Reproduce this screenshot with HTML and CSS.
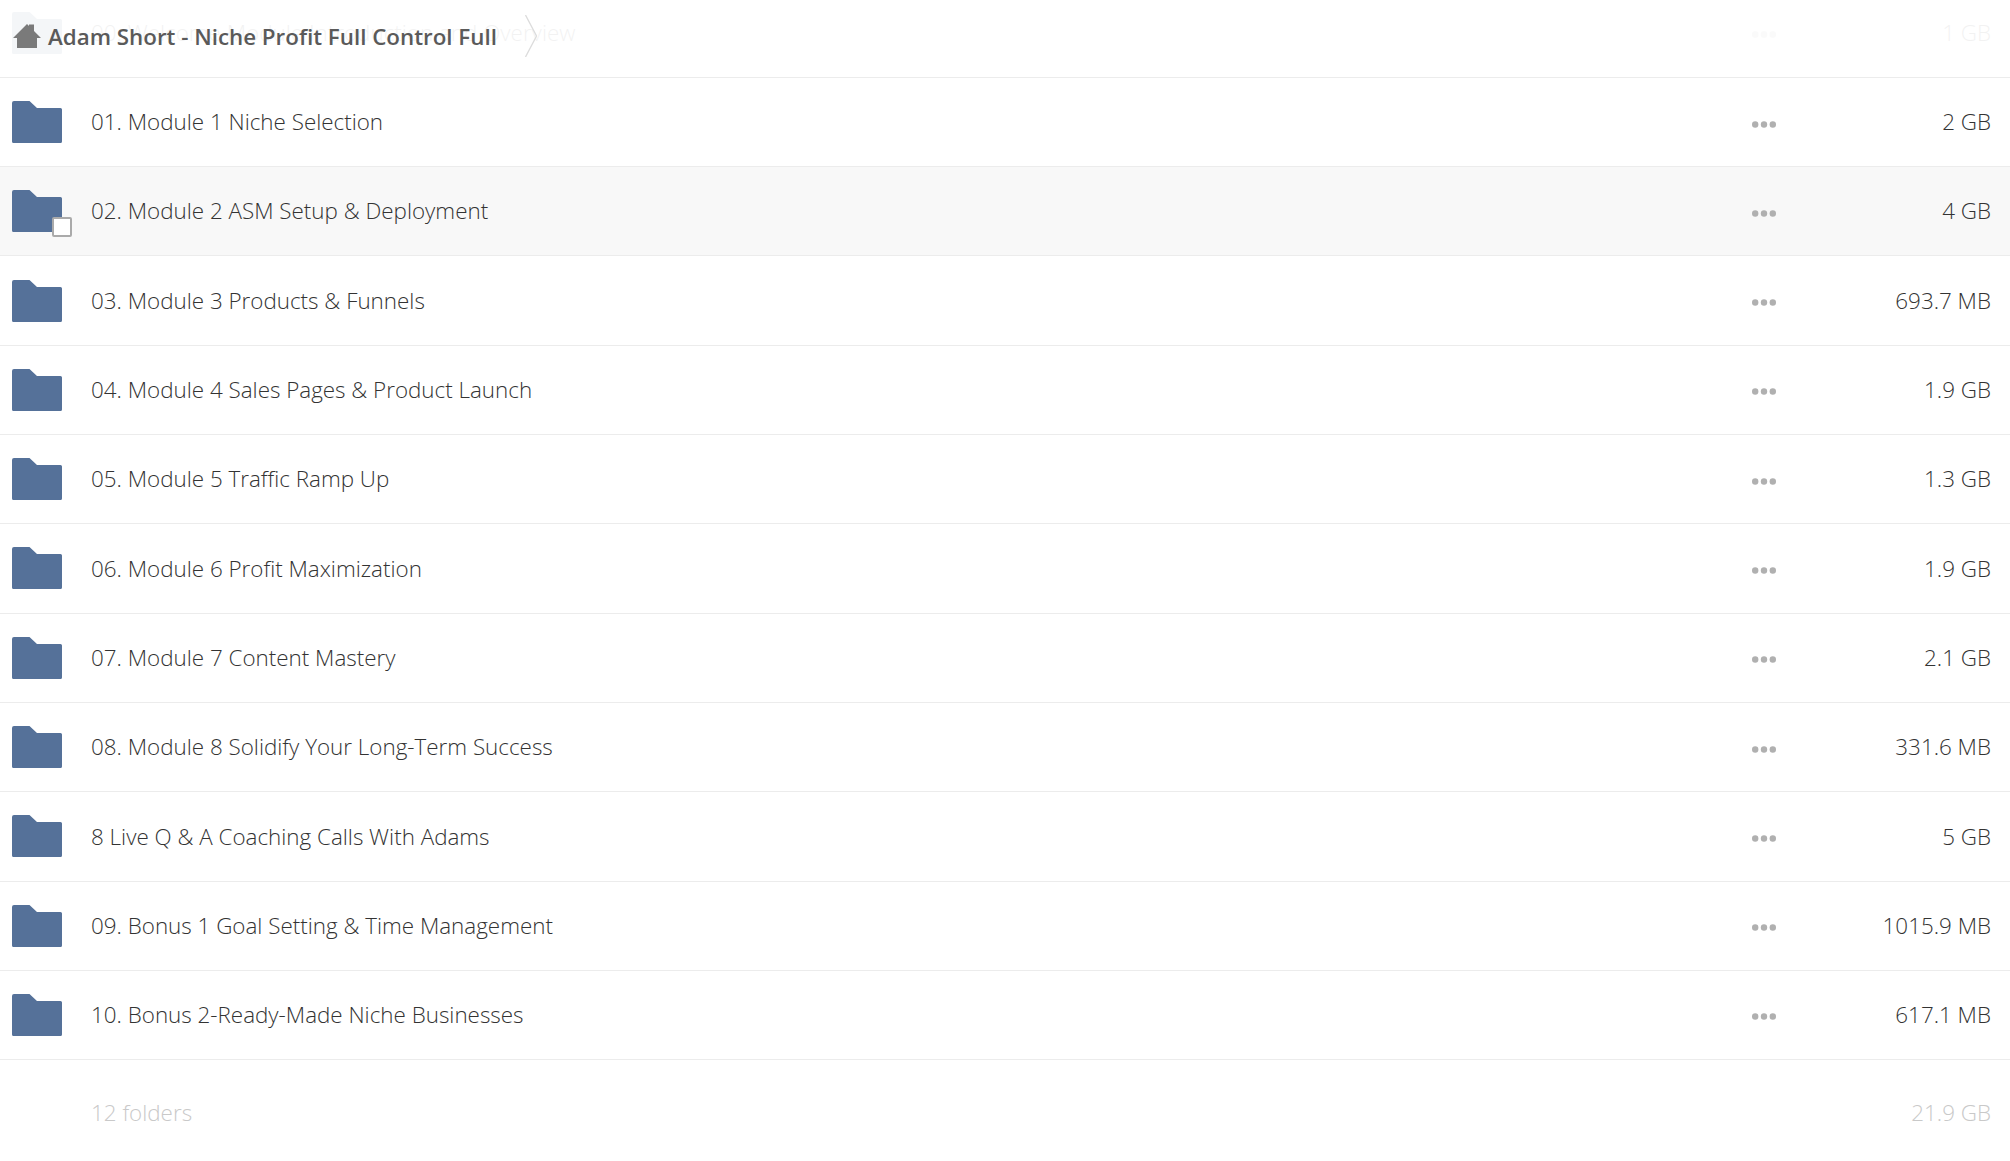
FILE: index.html
```html
<!DOCTYPE html>
<html lang="en">
<head>
<meta charset="utf-8">
<title>Adam Short - Niche Profit Full Control Full</title>
<link rel="stylesheet" href="styles.css">
</head>
<body>
<svg class="sprite" width="0" height="0" aria-hidden="true">
  <symbol id="folder" viewBox="0 0 50 42"><path d="M2 0H17.500L25 7H48.500Q50 7 50 8.500V40.500Q50 42 48.500 42H1.500Q0 42 0 40.500V2Q0 0 2 0Z"/></symbol>
  <symbol id="dots" viewBox="0 0 24 7"><circle cx="3.200" cy="3.500" r="3.200"/><circle cx="12" cy="3.500" r="3.200"/><circle cx="20.800" cy="3.500" r="3.200"/></symbol>
</svg>
<header class="crumb">
  <svg class="home" viewBox="0 0 28 24"><path d="M14 0L16 2V0.500H21V7L28 14H24V24H4V14H0Z"/></svg>
  <span class="crumb-title">Adam Short - Niche Profit Full Control Full</span>
  <svg class="chev" viewBox="0 0 12 42"><path d="M0.500 0L11.500 21L0.500 42"/></svg>
</header>
<main class="list">
  <div class="row faded"><svg class="folder"><use href="#folder"/></svg><span class="name">00. Welcome Module Introduction and Overview</span><svg class="dots"><use href="#dots"/></svg><span class="size">1 GB</span></div>
  <div class="row"><svg class="folder"><use href="#folder"/></svg><span class="name">01. Module 1 Niche Selection</span><svg class="dots"><use href="#dots"/></svg><span class="size">2 GB</span></div>
  <div class="row hover"><span class="icon-wrap"><svg class="folder"><use href="#folder"/></svg><span class="check"></span></span><span class="name">02. Module 2 ASM Setup &amp; Deployment</span><svg class="dots"><use href="#dots"/></svg><span class="size">4 GB</span></div>
  <div class="row"><svg class="folder"><use href="#folder"/></svg><span class="name">03. Module 3 Products &amp; Funnels</span><svg class="dots"><use href="#dots"/></svg><span class="size">693.7 MB</span></div>
  <div class="row"><svg class="folder"><use href="#folder"/></svg><span class="name">04. Module 4 Sales Pages &amp; Product Launch</span><svg class="dots"><use href="#dots"/></svg><span class="size">1.9 GB</span></div>
  <div class="row"><svg class="folder"><use href="#folder"/></svg><span class="name">05. Module 5 Traffic Ramp Up</span><svg class="dots"><use href="#dots"/></svg><span class="size">1.3 GB</span></div>
  <div class="row"><svg class="folder"><use href="#folder"/></svg><span class="name">06. Module 6 Profit Maximization</span><svg class="dots"><use href="#dots"/></svg><span class="size">1.9 GB</span></div>
  <div class="row"><svg class="folder"><use href="#folder"/></svg><span class="name">07. Module 7 Content Mastery</span><svg class="dots"><use href="#dots"/></svg><span class="size">2.1 GB</span></div>
  <div class="row"><svg class="folder"><use href="#folder"/></svg><span class="name">08. Module 8 Solidify Your Long-Term Success</span><svg class="dots"><use href="#dots"/></svg><span class="size">331.6 MB</span></div>
  <div class="row"><svg class="folder"><use href="#folder"/></svg><span class="name">8 Live Q &amp; A Coaching Calls With Adams</span><svg class="dots"><use href="#dots"/></svg><span class="size">5 GB</span></div>
  <div class="row"><svg class="folder"><use href="#folder"/></svg><span class="name">09. Bonus 1 Goal Setting &amp; Time Management</span><svg class="dots"><use href="#dots"/></svg><span class="size">1015.9 MB</span></div>
  <div class="row"><svg class="folder"><use href="#folder"/></svg><span class="name">10. Bonus 2-Ready-Made Niche Businesses</span><svg class="dots"><use href="#dots"/></svg><span class="size">617.1 MB</span></div>
  <div class="summary"><span class="name">12 folders</span><span class="size">21.9 GB</span></div>
</main>
</body>
</html>
```
FILE: styles.css
```css
html, body {
  margin: 0;
  padding: 0;
  height: 1161px;
  overflow: hidden;
  background: #fff;
}
body {
  position: relative;
  font-family: "Open Sans", "Liberation Sans", sans-serif;
  color: #333;
}
.sprite { position: absolute; }
.crumb {
  position: absolute;
  left: 13px;
  top: 15px;
  height: 42px;
  display: flex;
  align-items: center;
  z-index: 2;
}
.home { width: 28px; height: 24px; fill: #7a7a7a; margin-right: 7px; }
.crumb-title { font-size: 22.350px; font-weight: 600; color: #5a5a5a; line-height: 42px; padding-top: 1px; }
.chev { width: 12px; height: 42px; margin-left: 28px; fill: none; stroke: #dcdcdc; stroke-width: 1.300; }
.list { margin-top: -11.450px; }
.row {
  display: grid;
  grid-template-columns: 79px 1fr 24px 215px;
  align-items: center;
  height: 88.300px;
  border-bottom: 1px solid #ececec;
  padding: 0 19px 0 12px;
}
.row .name, .row .size { padding-bottom: 0.700px; }
.row.faded > * { opacity: 0.06; }
.row.hover { background: #f8f8f8; }
.folder { width: 50px; height: 42px; fill: #557199; display: block; }
.icon-wrap { position: relative; display: block; width: 50px; height: 42px; }
.check {
  position: absolute;
  left: 40px;
  top: 27px;
  width: 16px;
  height: 16px;
  background: #fff;
  border: 2px solid #aaa;
  border-radius: 2px;
}
.name { font-size: 22.400px; font-weight: 300; white-space: nowrap; }
.dots { width: 24px; height: 7px; fill: #b0b0b0; position: relative; top: 2px; }
.size { font-size: 22.400px; font-weight: 300; text-align: right; white-space: nowrap; }
.summary {
  display: grid;
  grid-template-columns: 1fr auto;
  padding: 37px 19px 0 91px;
  color: #c9c9c9;
}
```
